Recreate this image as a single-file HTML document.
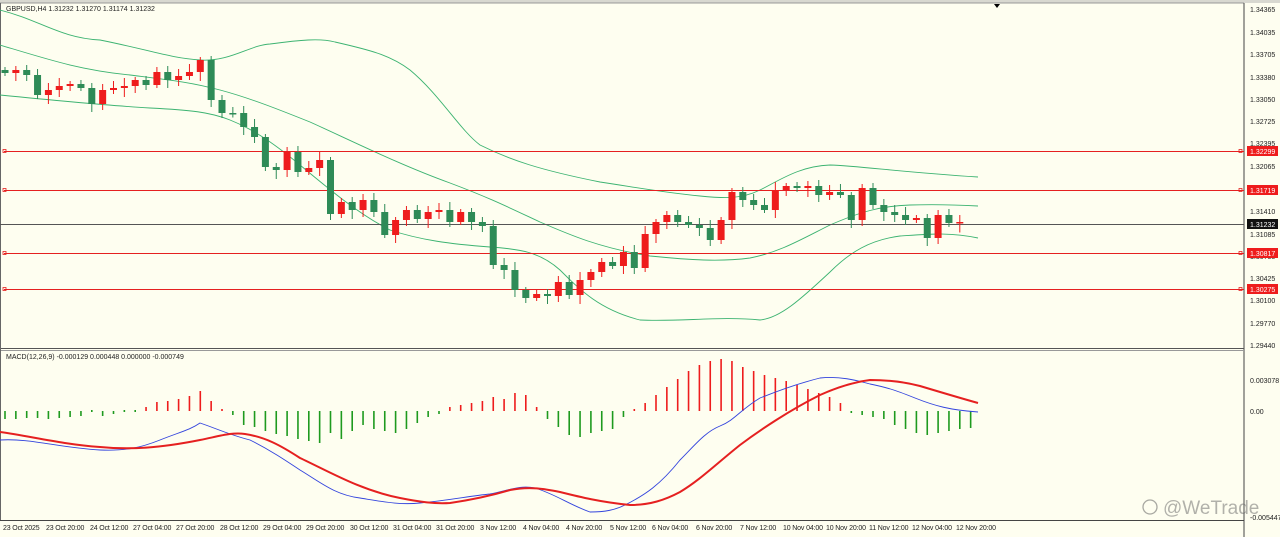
<!DOCTYPE html>
<html><head><meta charset="utf-8"><style>
html,body{margin:0;padding:0;background:#fff;}
body{width:1280px;height:537px;overflow:hidden;font-family:"Liberation Sans",sans-serif;}
svg text{font-family:"Liberation Sans",sans-serif;font-size:7px;fill:#222;}
.t text{font-size:7px;letter-spacing:-0.15px;}
</style></head><body>
<svg id="c" width="1280" height="537" xmlns="http://www.w3.org/2000/svg">
<rect x="0" y="0" width="1280" height="537" fill="#fefef0"/>
<rect x="0" y="0" width="1280" height="3" fill="#d8d8d0"/>
<line x1="0" y1="3" x2="1244" y2="3" stroke="#999"/>
<line x1="1244" y1="3" x2="1244" y2="537" stroke="#444"/>
<line x1="0" y1="348.5" x2="1244" y2="348.5" stroke="#555"/>
<line x1="0" y1="350.5" x2="1244" y2="350.5" stroke="#999"/>
<line x1="0" y1="520.5" x2="1244" y2="520.5" stroke="#444"/>
<line x1="0.5" y1="3" x2="0.5" y2="520" stroke="#666"/>
<polygon points="994,4 1000,4 997,8" fill="#000"/>
<g id="bands" fill="none" stroke="#3cb371" stroke-width="0.9">
<path d="M0,10 C40,20 60,38 100,40 C150,50 170,58 200,60 C230,62 250,45 270,44 C300,40 320,38 335,42 C370,50 390,55 410,70 C440,95 460,130 480,145 C510,160 540,170 600,182 C640,188 660,192 700,196 C720,198 740,200 760,190 C780,180 800,166 830,165 C860,166 900,172 978,177"/>
<path d="M0,45 C50,60 80,70 130,75 C170,80 190,82 220,90 C250,98 280,110 310,122 C350,140 400,165 450,183 C490,198 510,208 540,222 C570,235 600,248 650,256 C690,260 720,262 750,258 C780,252 800,240 830,225 C860,212 880,206 910,205 C940,204 960,205 978,206"/>
<path d="M0,95 C50,100 100,105 150,108 C190,110 210,112 230,120 C250,128 270,140 300,165 C330,190 360,215 390,230 C420,240 450,244 490,247 C520,249 540,252 560,270 C580,290 600,310 640,320 C680,322 720,316 760,320 C780,318 800,300 830,272 C850,252 870,240 900,236 C930,234 950,232 978,238"/>
</g>
<g stroke="#e52020" stroke-width="0.9">
<line x1="4" y1="151.5" x2="1244" y2="151.5"/><line x1="4" y1="190.5" x2="1244" y2="190.5"/>
<line x1="4" y1="253.5" x2="1244" y2="253.5"/><line x1="4" y1="289.5" x2="1244" y2="289.5"/>
</g>
<g fill="none" stroke="#e52020" stroke-width="0.8">
<rect x="3" y="149.5" width="3" height="3"/><rect x="3" y="188.5" width="3" height="3"/><rect x="3" y="251.5" width="3" height="3"/><rect x="3" y="287.5" width="3" height="3"/>
<rect x="1239" y="149.5" width="3" height="3"/><rect x="1239" y="188.5" width="3" height="3"/><rect x="1239" y="251.5" width="3" height="3"/><rect x="1239" y="287.5" width="3" height="3"/>
</g>
<line x1="0" y1="224.5" x2="1244" y2="224.5" stroke="#555" stroke-width="0.9"/>
<g id="candles"></g>
<g id="hist"></g>
<path fill="none" stroke="#3344dd" stroke-width="0.9" d="M0,440 C30,438 60,448 100,450 C125,451 140,448 160,440 C180,432 190,430 200,423 C215,428 230,435 250,440 C270,450 285,460 300,470 C320,482 335,495 360,498 C385,502 400,505 420,503 C450,500 470,496 490,494 C510,490 520,485 535,488 C555,494 570,505 590,512 C605,512 615,510 625,505 C645,495 660,485 680,460 C695,445 705,432 720,426 C735,420 740,410 760,398 C780,390 800,383 820,378 C840,376 855,380 870,384 C890,388 900,392 915,398 C935,406 950,410 978,412"/>
<path fill="none" stroke="#e52020" stroke-width="2" d="M0,432 C30,436 60,444 100,447 C130,450 160,448 200,440 C220,436 232,432 245,434 C265,437 280,445 300,458 C330,472 360,490 400,498 C420,502 435,504 450,503 C470,500 490,496 510,490 C530,486 545,489 560,492 C580,497 600,502 630,505 C650,505 665,500 680,492 C700,480 715,465 740,445 C760,430 790,410 820,395 C840,386 855,382 870,380 C890,380 905,382 920,386 C940,392 960,398 978,403"/>
<g>
<text x="1250" y="12">1.34365</text><text x="1250" y="35">1.34035</text><text x="1250" y="57">1.33705</text><text x="1250" y="80">1.33380</text><text x="1250" y="102">1.33050</text><text x="1250" y="124">1.32725</text><text x="1250" y="146">1.32395</text><text x="1250" y="169">1.32065</text><text x="1250" y="214">1.31410</text><text x="1250" y="237">1.31085</text><text x="1250" y="259">1.30755</text><text x="1250" y="281">1.30425</text><text x="1250" y="303">1.30100</text><text x="1250" y="326">1.29770</text><text x="1250" y="348">1.29440</text>
<rect x="1247" y="146" width="31" height="10" fill="#ee1c1c"/><text x="1250" y="154" style="fill:#fff">1.32299</text>
<rect x="1247" y="185" width="31" height="10" fill="#ee1c1c"/><text x="1250" y="193" style="fill:#fff">1.31719</text>
<rect x="1247" y="219" width="31" height="10" fill="#111"/><text x="1250" y="227" style="fill:#fff">1.31232</text>
<rect x="1247" y="248" width="31" height="10" fill="#ee1c1c"/><text x="1250" y="256" style="fill:#fff">1.30817</text>
<rect x="1247" y="284" width="31" height="10" fill="#ee1c1c"/><text x="1250" y="292" style="fill:#fff">1.30275</text>
<text x="1250" y="383">0.003078</text><text x="1250" y="414">0.00</text><text x="1250" y="520">-0.005447</text>
</g>
<text x="6" y="11">GBPUSD,H4  1.31232 1.31270 1.31174 1.31232</text>
<text x="6" y="359">MACD(12,26,9) -0.000129 0.000448 0.000000 -0.000749</text>
<g class="t">
<text x="3" y="530">23 Oct 2025</text><text x="46" y="530">23 Oct 20:00</text><text x="90" y="530">24 Oct 12:00</text><text x="133" y="530">27 Oct 04:00</text><text x="176" y="530">27 Oct 20:00</text><text x="220" y="530">28 Oct 12:00</text><text x="263" y="530">29 Oct 04:00</text><text x="306" y="530">29 Oct 20:00</text><text x="350" y="530">30 Oct 12:00</text><text x="393" y="530">31 Oct 04:00</text><text x="436" y="530">31 Oct 20:00</text><text x="480" y="530">3 Nov 12:00</text><text x="523" y="530">4 Nov 04:00</text><text x="566" y="530">4 Nov 20:00</text><text x="610" y="530">5 Nov 12:00</text><text x="652" y="530">6 Nov 04:00</text><text x="696" y="530">6 Nov 20:00</text><text x="740" y="530">7 Nov 12:00</text><text x="783" y="530">10 Nov 04:00</text><text x="826" y="530">10 Nov 20:00</text><text x="869" y="530">11 Nov 12:00</text><text x="912" y="530">12 Nov 04:00</text><text x="956" y="530">12 Nov 20:00</text>
</g>
<g opacity="0.5">
<circle cx="1150" cy="507" r="7" fill="none" stroke="#555" stroke-width="1.3"/>
<text x="1163" y="514" style="font-size:19px;fill:#666">@WeTrade</text>
</g>
</svg>
<script>
var closes=[73,70,75,95,90,86,84,88,104,90,88,86,80,85,72,80,76,72,60,100,113,113,127,137,167,170,152,172,168,160,214,202,210,200,212,235,220,210,219,212,210,222,212,222,226,265,270,290,298,294,296,282,295,280,272,262,266,252,268,234,222,215,222,225,228,240,220,192,200,205,210,190,186,188,186,195,192,195,220,188,205,212,215,220,218,238,215,223,222];
var g=document.getElementById('candles'),h='',sp=10.85,prev=70;
for(var i=0;i<closes.length;i++){var x=5+i*sp,c=closes[i],o=prev;prev=c;
var up=c<o,col=up?'#ee1c1c':'#2e8b57',t=Math.min(o,c),b=Math.max(o,c);if(b-t<1.5)b=t+1.5;
var wt=t-3-((i*7)%6),wb=b+3+((i*5)%7);
h+='<line x1="'+x+'" y1="'+wt+'" x2="'+x+'" y2="'+wb+'" stroke="'+col+'"/>';
h+='<rect x="'+(x-3.5)+'" y="'+t+'" width="7" height="'+(b-t)+'" fill="'+col+'"/>';}
g.innerHTML=h;
var hv=[-8,-8,-7,-7,-8,-7,-6,-5,-1,-5,-3,-1,-1,4,9,10,12,15,20,10,2,-4,-14,-16,-20,-23,-25,-28,-30,-32,-22,-28,-20,-14,-18,-20,-22,-18,-12,-6,-3,4,6,8,10,14,12,18,16,4,-8,-16,-24,-26,-22,-20,-18,-6,2,8,16,24,32,40,46,50,52,50,44,40,36,33,30,26,22,18,14,8,-2,-4,-6,-8,-14,-18,-22,-24,-22,-20,-18,-17];
var hs='';for(var i=0;i<hv.length;i++){var x=5+i*sp,v=hv[i],col=v>0?'#ee1c1c':'#1e9a1e',y0=411;
var y1=v>0?y0-v:y0,y2=v>0?y0:y0-v;if(Math.abs(v)<2){y1=410;y2=412;}
hs+='<line x1="'+x+'" y1="'+y1+'" x2="'+x+'" y2="'+y2+'" stroke="'+col+'" stroke-width="1.6"/>';}
document.getElementById('hist').innerHTML=hs;
</script>
</body></html>
